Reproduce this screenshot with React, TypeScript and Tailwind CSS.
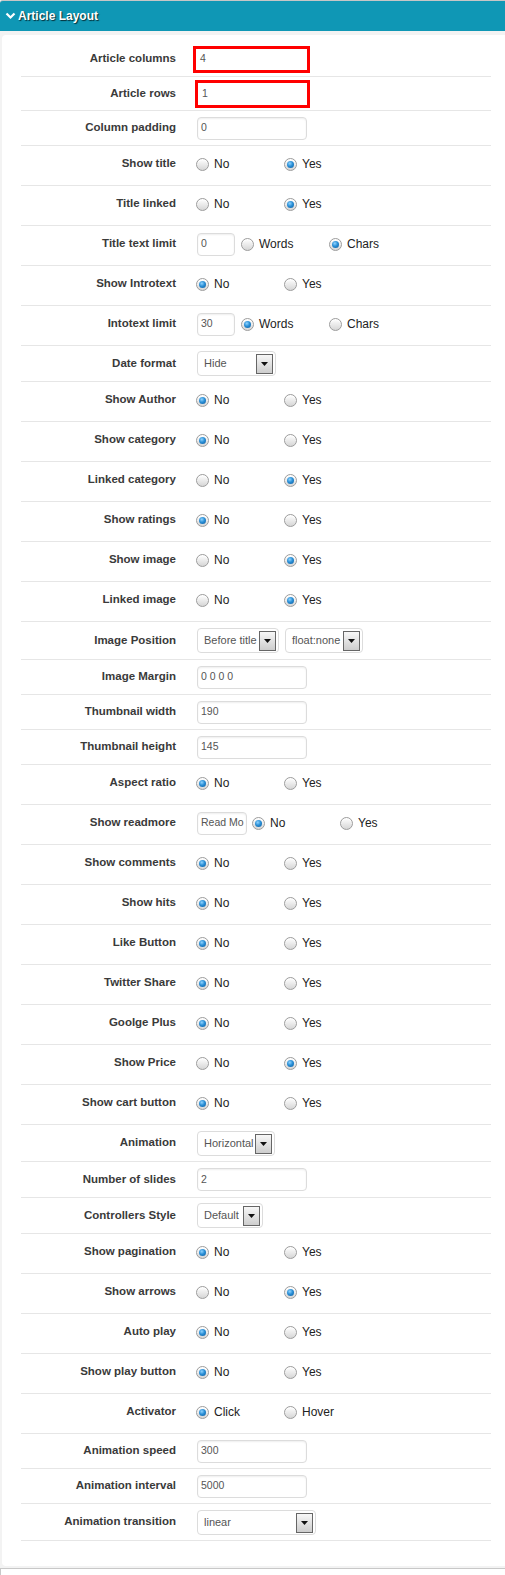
import React from "react";

type Row =
  | { kind: "input"; label: string; value: string; h: string; width?: string }
  | { kind: "red"; label: string; value: string; h: string; box: string }
  | { kind: "radio"; label: string; options: string[]; checked: number; prefix?: { value: string; width: string; gap: string } }
  | { kind: "select"; label: string; h: string; selects: { text: string; width: string }[] };

const NY = ["No", "Yes"];

const rows: Row[] = [
  { kind: "red", label: "Article columns", value: "4", h: "h-[35px]", box: "w-[117px] h-[27px] ml-[-4px]" },
  { kind: "red", label: "Article rows", value: "1", h: "h-[34px]", box: "w-[115px] h-[28px] ml-[-2px]" },
  { kind: "input", label: "Column padding", value: "0", h: "h-[35px]" },
  { kind: "radio", label: "Show title", options: NY, checked: 1 },
  { kind: "radio", label: "Title linked", options: NY, checked: 1 },
  { kind: "radio", label: "Title text limit", options: ["Words", "Chars"], checked: 1, prefix: { value: "0", width: "w-[38px]", gap: "mr-[6px]" } },
  { kind: "radio", label: "Show Introtext", options: NY, checked: 0 },
  { kind: "radio", label: "Intotext limit", options: ["Words", "Chars"], checked: 0, prefix: { value: "30", width: "w-[38px]", gap: "mr-[6px]" } },
  { kind: "select", label: "Date format", h: "h-[36px]", selects: [{ text: "Hide", width: "w-[79px]" }] },
  { kind: "radio", label: "Show Author", options: NY, checked: 0 },
  { kind: "radio", label: "Show category", options: NY, checked: 0 },
  { kind: "radio", label: "Linked category", options: NY, checked: 1 },
  { kind: "radio", label: "Show ratings", options: NY, checked: 0 },
  { kind: "radio", label: "Show image", options: NY, checked: 1 },
  { kind: "radio", label: "Linked image", options: NY, checked: 1 },
  {
    kind: "select",
    label: "Image Position",
    h: "h-[38px]",
    selects: [
      { text: "Before title", width: "w-[82px]" },
      { text: "float:none", width: "w-[78px]" },
    ],
  },
  { kind: "input", label: "Image Margin", value: "0 0 0 0", h: "h-[35px]" },
  { kind: "input", label: "Thumbnail width", value: "190", h: "h-[35px]" },
  { kind: "input", label: "Thumbnail height", value: "145", h: "h-[35px]" },
  { kind: "radio", label: "Aspect ratio", options: NY, checked: 0 },
  { kind: "radio", label: "Show readmore", options: NY, checked: 0, prefix: { value: "Read Mo", width: "w-[50px]", gap: "mr-[5px]" } },
  { kind: "radio", label: "Show comments", options: NY, checked: 0 },
  { kind: "radio", label: "Show hits", options: NY, checked: 0 },
  { kind: "radio", label: "Like Button", options: NY, checked: 0 },
  { kind: "radio", label: "Twitter Share", options: NY, checked: 0 },
  { kind: "radio", label: "Goolge Plus", options: NY, checked: 0 },
  { kind: "radio", label: "Show Price", options: NY, checked: 1 },
  { kind: "radio", label: "Show cart button", options: NY, checked: 0 },
  { kind: "select", label: "Animation", h: "h-[37px]", selects: [{ text: "Horizontal", width: "w-[78px]" }] },
  { kind: "input", label: "Number of slides", value: "2", h: "h-[36px]" },
  { kind: "select", label: "Controllers Style", h: "h-[36px]", selects: [{ text: "Default", width: "w-[66px]" }] },
  { kind: "radio", label: "Show pagination", options: NY, checked: 0 },
  { kind: "radio", label: "Show arrows", options: NY, checked: 1 },
  { kind: "radio", label: "Auto play", options: NY, checked: 0 },
  { kind: "radio", label: "Show play button", options: NY, checked: 0 },
  { kind: "radio", label: "Activator", options: ["Click", "Hover"], checked: 0 },
  { kind: "input", label: "Animation speed", value: "300", h: "h-[35px]" },
  { kind: "input", label: "Animation interval", value: "5000", h: "h-[35px]" },
  { kind: "select", label: "Animation transition", h: "h-[37px]", selects: [{ text: "linear", width: "w-[119px]" }] },
];

function Radio({ on }: { on: boolean }) {
  return (
    <span className="relative flex h-[13px] w-[13px] shrink-0 items-center justify-center rounded-full border border-[#9c9c9c] bg-[linear-gradient(#ffffff,#d6d6d6)] shadow-[inset_0_1px_1px_rgba(255,255,255,0.9)]">
      {on && (
        <span className="h-[7px] w-[7px] rounded-full bg-[radial-gradient(circle_at_40%_35%,#8fd3ff_0%,#2a8fd6_45%,#0b5a9c_100%)]" />
      )}
    </span>
  );
}

function TextBox({ value, width }: { value: string; width: string }) {
  return (
    <div
      className={`${width} flex h-[23px] items-center rounded-[4px] border border-[#dcdcdc] bg-white pl-[3px] text-[10.5px] text-[#555] shadow-[inset_0_1px_2px_rgba(0,0,0,0.07)] overflow-hidden whitespace-nowrap`}
    >
      {value}
    </div>
  );
}

function Select({ text, width }: { text: string; width: string }) {
  return (
    <div className={`${width} relative flex h-[25px] items-center rounded-[4px] border border-[#dcdcdc] bg-white pl-[6px] text-[11px] text-[#555]`}>
      <span className="whitespace-nowrap">{text}</span>
      <span className="absolute right-[2px] top-[2px] flex h-[20px] w-[17px] items-center justify-center border border-[#666] bg-[linear-gradient(#f7f7f7,#cdcdcd)]">
        <svg width="7" height="4" viewBox="0 0 7 4">
          <polygon points="0,0 7,0 3.5,4" fill="#111" />
        </svg>
      </span>
    </div>
  );
}

function Options({ options, checked }: { options: string[]; checked: number }) {
  return (
    <div className="flex items-center">
      {options.map((o, i) => (
        <div key={o} className="flex w-[88px] items-center">
          <Radio on={i === checked} />
          <span className="ml-[5px] text-[12px] text-[#222]">{o}</span>
        </div>
      ))}
    </div>
  );
}

function Label({ text }: { text: string }) {
  return <div className="w-[155px] shrink-0 text-right text-[11.5px] font-bold text-[#3a3a3a]">{text}</div>;
}

function RowView({ row }: { row: Row }) {
  if (row.kind === "radio") {
    return (
      <div className="flex h-[40px] items-center border-b border-[#e6e6e6] pb-[3px]">
        <Label text={row.label} />
        <div className="ml-[20px] flex items-center">
          {row.prefix && (
            <div className={`${row.prefix.gap} ml-[1px]`}>
              <TextBox value={row.prefix.value} width={row.prefix.width} />
            </div>
          )}
          <Options options={row.options} checked={row.checked} />
        </div>
      </div>
    );
  }
  if (row.kind === "select") {
    return (
      <div className={`flex ${row.h} items-center border-b border-[#e6e6e6]`}>
        <Label text={row.label} />
        <div className="ml-[21px] flex items-center gap-[6px]">
          {row.selects.map((s) => (
            <Select key={s.text} text={s.text} width={s.width} />
          ))}
        </div>
      </div>
    );
  }
  if (row.kind === "red") {
    return (
      <div className={`flex ${row.h} items-center border-b border-[#e6e6e6]`}>
        <Label text={row.label} />
        <div className="ml-[21px] flex items-center">
          <div className={`${row.box} flex items-center border-[3px] border-[#ff0000] bg-white pl-[4px] text-[10.5px] text-[#555]`}>
            {row.value}
          </div>
        </div>
      </div>
    );
  }
  return (
    <div className={`flex ${row.h} items-center border-b border-[#e6e6e6]`}>
      <Label text={row.label} />
      <div className="ml-[21px] flex items-center">
        <TextBox value={row.value} width={row.width ?? "w-[110px]"} />
      </div>
    </div>
  );
}

export default function App() {
  return (
    <div className="w-[505px] h-[1575px] overflow-hidden bg-[#f3f3f3] font-['Liberation_Sans',Arial,sans-serif]">
      <div className="flex h-[31px] items-center rounded-tl-[3px] border-t border-[#c6c6c6] bg-[#0f97b5] pl-[5px]">
        <svg width="11" height="8" viewBox="0 0 11 8" className="mr-[2px]">
          <polyline points="1.5,1.5 5.5,5.5 9.5,1.5" fill="none" stroke="#fff" strokeWidth="2.2" />
        </svg>
        <span className="text-[12px] font-bold text-white [text-shadow:1px_1px_1px_rgba(0,0,0,0.7)]">Article Layout</span>
      </div>
      <div className="ml-[2px] mt-[4px] h-[1531px] rounded-l-[4px] bg-white pl-[19px] pt-[7px]">
        <div className="w-[470px]">
          {rows.map((r) => (
            <RowView key={r.label} row={r} />
          ))}
        </div>
      </div>
      <div className="mt-[2px] ml-[0px] h-[10px] border-t border-l border-[#c8c8c8] bg-white" />
    </div>
  );
}
